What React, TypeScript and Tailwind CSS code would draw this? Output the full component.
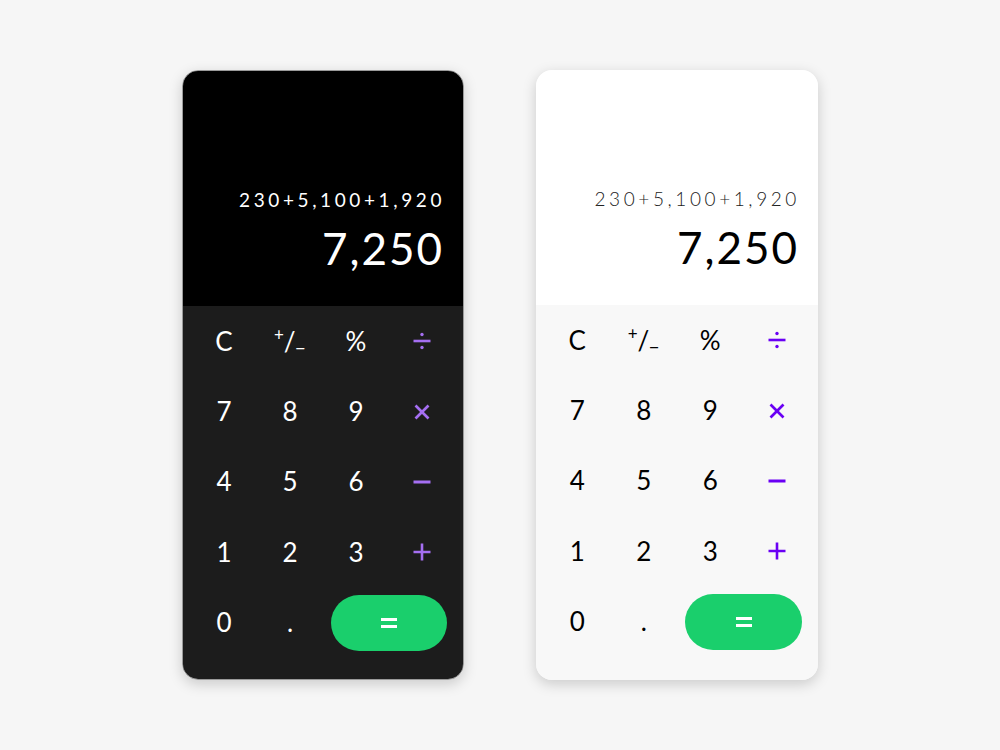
import React from 'react'

type Theme = 'dark' | 'light'

const keys = [
  ['C', 'pm', '%', 'div'],
  ['7', '8', '9', 'mul'],
  ['4', '5', '6', 'sub'],
  ['1', '2', '3', 'add'],
]

const ops = ['div', 'mul', 'sub', 'add']

// operator glyphs drawn as strokes so their weight matches the keypad
const OpIcon = ({ op }: { op: string }) => (
  <svg width="20" height="20" viewBox="0 0 20 20" fill="none" stroke="currentColor" strokeWidth="2.6">
    {op === 'div' && (
      <>
        <line x1="1.5" y1="10" x2="18.5" y2="10" />
        <circle cx="10" cy="3.5" r="1.7" fill="currentColor" stroke="none" />
        <circle cx="10" cy="16.5" r="1.7" fill="currentColor" stroke="none" />
      </>
    )}
    {op === 'mul' && (
      <>
        <line x1="3.5" y1="3.5" x2="16.5" y2="16.5" />
        <line x1="16.5" y1="3.5" x2="3.5" y2="16.5" />
      </>
    )}
    {op === 'sub' && <line x1="1.5" y1="10" x2="18.5" y2="10" strokeWidth="3" />}
    {op === 'add' && (
      <>
        <line x1="1.5" y1="10" x2="18.5" y2="10" />
        <line x1="10" y1="1.5" x2="10" y2="18.5" />
      </>
    )}
  </svg>
)

const PlusMinus = () => (
  <span className="relative inline-flex items-center">
    <span className="text-[17px] leading-none -mt-[14px]">+</span>
    <span className="text-[26px] leading-none">/</span>
    <span className="text-[20px] leading-none -mb-[10px] -ml-[1px]">–</span>
  </span>
)

const Calculator = ({ theme }: { theme: Theme }) => {
  const dark = theme === 'dark'
  const textColor = dark ? 'text-white' : 'text-black'
  const opColor = dark ? 'text-[#a56ff2]' : 'text-[#6a00f4]'

  return (
    <div
      className={
        dark
          ? 'w-[282px] h-[610px] rounded-[16px] overflow-hidden flex flex-col border border-[#9a9a9a] shadow-[0_4px_14px_rgba(0,0,0,0.18)]'
          : 'w-[282px] h-[610px] rounded-[16px] overflow-hidden flex flex-col shadow-[0_4px_14px_rgba(0,0,0,0.18)]'
      }
    >
      {/* display */}
      <div
        className={`h-[235px] flex flex-col items-end justify-end pr-[21px] pb-[36px] ${
          dark ? 'bg-black' : 'bg-white'
        } ${textColor}`}
      >
        <div
          className={`text-[19px] tracking-[3.6px] leading-none mb-[17px] -mr-[3px] ${
            dark ? 'font-normal' : 'font-light text-[#222]'
          }`}
        >
          230+5,100+1,920
        </div>
        <div className="text-[44px] tracking-[2px] -mr-[2px] leading-none font-normal">7,250</div>
      </div>

      {/* keypad */}
      <div className={`flex-1 px-[8px] ${dark ? 'bg-[#1c1c1c]' : 'bg-[#f8f8f8]'}`}>
        <div className="grid grid-cols-4 grid-rows-5 h-[352px]">
          {keys.flat().map((k) => (
            <div
              key={k}
              className={`flex items-center justify-center text-[26px] ${ops.includes(k) ? opColor : textColor}`}
            >
              {k === 'pm' ? <PlusMinus /> : ops.includes(k) ? <OpIcon op={k} /> : k}
            </div>
          ))}
          <div className={`flex items-center justify-center text-[26px] ${textColor}`}>0</div>
          <div className={`flex items-center justify-center text-[26px] ${textColor}`}>.</div>
          <div className="col-span-2 flex items-center justify-center px-[8px]">
            <button className="w-full h-[56px] rounded-full bg-[#1acf6c] text-white flex items-center justify-center">
              <svg width="16" height="12" viewBox="0 0 16 12" fill="currentColor">
                <rect x="0" y="1" width="16" height="3" />
                <rect x="0" y="8" width="16" height="3" />
              </svg>
            </button>
          </div>
        </div>
      </div>
    </div>
  )
}

const App = () => {
  return (
    <div
      className="w-full min-h-screen bg-[#f6f6f6] flex items-center justify-center gap-[72px]"
      style={{ fontFamily: 'Lato, "Open Sans", sans-serif' }}
    >
      <Calculator theme="dark" />
      <Calculator theme="light" />
    </div>
  )
}

export default App
